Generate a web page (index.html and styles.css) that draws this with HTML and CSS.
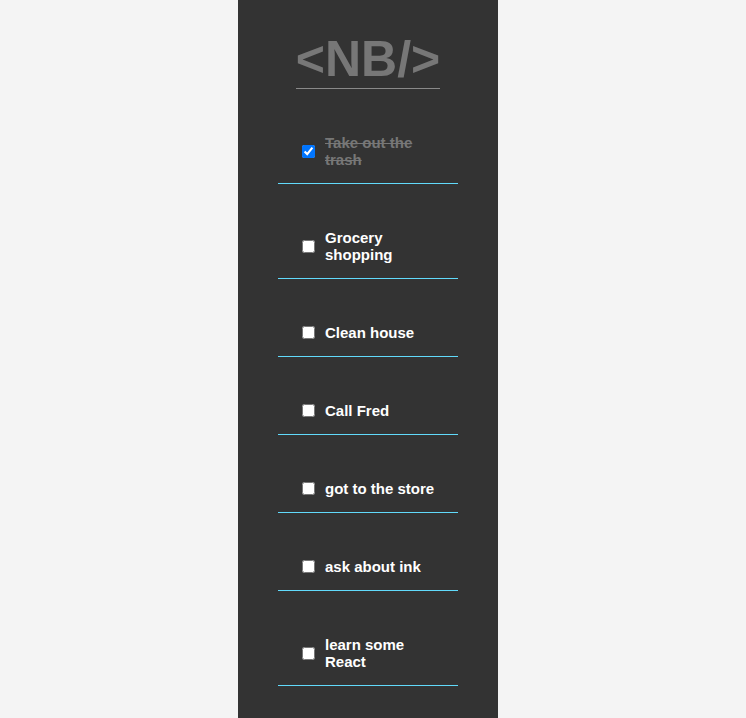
FILE: index.html
```html
<!DOCTYPE html>
<html>
<head>
<meta charset="utf-8">
<link rel="stylesheet" href="styles.css">
</head>
<body>
<div class="page">
  <main class="app">
    <header class="brand"><h1 class="logo">&lt;NB/&gt;</h1></header>
    <ul class="todos">
      <li class="todo done"><input type="checkbox" checked><span class="text">Take out the trash</span></li>
      <li class="todo"><input type="checkbox"><span class="text">Grocery shopping</span></li>
      <li class="todo"><input type="checkbox"><span class="text">Clean house</span></li>
      <li class="todo"><input type="checkbox"><span class="text">Call Fred</span></li>
      <li class="todo"><input type="checkbox"><span class="text">got to the store</span></li>
      <li class="todo"><input type="checkbox"><span class="text">ask about ink</span></li>
      <li class="todo"><input type="checkbox"><span class="text">learn some React</span></li>
    </ul>
  </main>
</div>
</body>
</html>
```
FILE: styles.css
```css
html, body {
  margin: 0;
  padding: 0;
  height: 100%;
}
body {
  background: #f4f4f4;
  font-family: "Liberation Sans", Arial, sans-serif;
  overflow: hidden;
}
.page {
  display: flex;
  justify-content: center;
  padding-right: 10px;
  min-height: 100%;
}
.app {
  width: 260px;
  background: #333333;
  min-height: 718px;
  display: flex;
  flex-direction: column;
  align-items: center;
}
.brand {
  padding-top: 31px;
}
.logo {
  margin: 0;
  display: inline-block;
  font-size: 50px;
  font-weight: bold;
  line-height: 57px;
  color: #777777;
  border-bottom: 1px solid #8a8a8a;
}
.todos {
  list-style: none;
  margin: 0;
  padding: 0;
  width: 180px;
}
.todo {
  margin-top: 30px;
  padding: 15px 0 15px 21px;
  border-bottom: 1px solid #61dafb;
  display: flex;
  align-items: center;
}
.todo input {
  width: 13px;
  height: 13px;
  margin: 0 10px 0 3px;
  flex: none;
}
.text {
  max-width: 115px;
  color: #ffffff;
  font-size: 15px;
  font-weight: bold;
  line-height: 17px;
}
.done .text {
  color: #777777;
  text-decoration: line-through;
}
```
